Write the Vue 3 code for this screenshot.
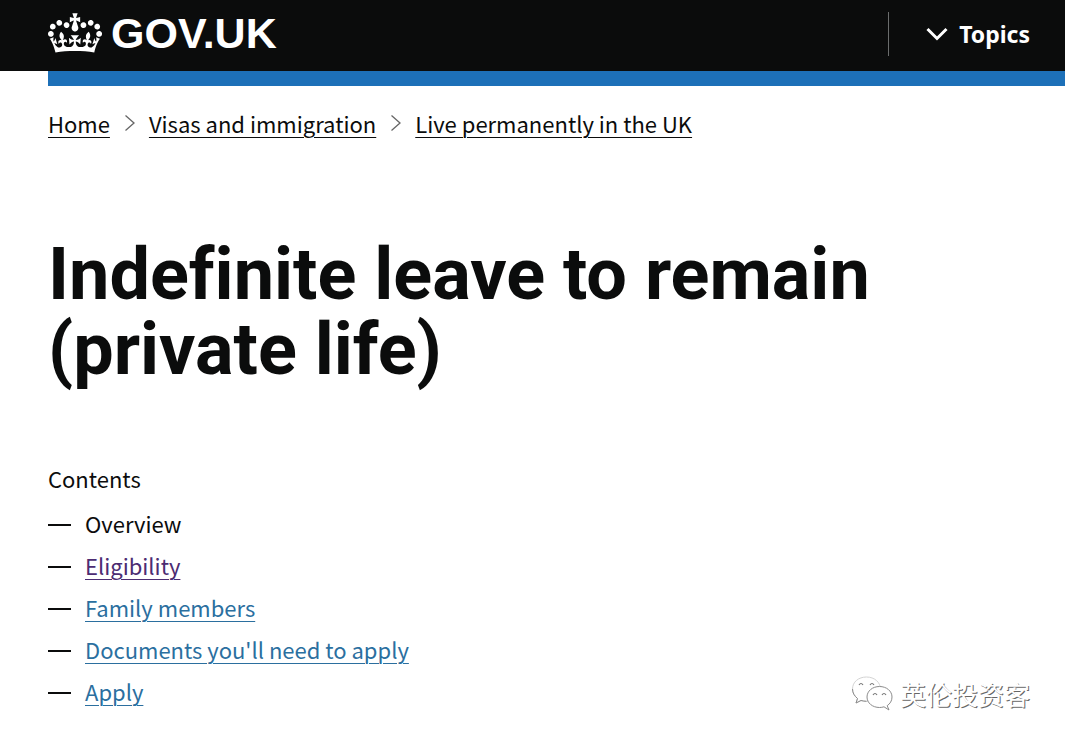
<script setup>
const crumbs = ['Home', 'Visas and immigration', 'Live permanently in the UK']
const contents = [
  { label: 'Overview', state: 'current' },
  { label: 'Eligibility', state: 'visited' },
  { label: 'Family members', state: 'link' },
  { label: "Documents you'll need to apply", state: 'link' },
  { label: 'Apply', state: 'link' },
]
</script>

<template>
  <div class="page">
    <header class="header">
      <a class="logo" href="#" aria-label="GOV.UK">
        <svg class="crown" viewBox="0 0 132 97" aria-hidden="true">
          <path fill="currentColor" d="M25 30.2c3.5 1.5 7.7-.2 9.1-3.7 1.5-3.6-.2-7.8-3.9-9.2-3.6-1.4-7.6.3-9.1 3.9-1.4 3.5.3 7.5 3.9 9zM9 39.5c3.6 1.5 7.8-.2 9.2-3.7 1.5-3.6-.2-7.8-3.9-9.1-3.6-1.5-7.6.2-9.1 3.8-1.4 3.5.3 7.5 3.8 9zM4.4 57.2c3.5 1.5 7.7-.2 9.1-3.8 1.5-3.6-.2-7.7-3.9-9.1-3.5-1.5-7.6.3-9.1 3.8-1.4 3.5.3 7.6 3.9 9.1zm38.3-21.4c3.5 1.5 7.7-.2 9.1-3.8 1.5-3.6-.2-7.7-3.9-9.1-3.6-1.5-7.6.3-9.1 3.8-1.3 3.6.4 7.7 3.9 9.1zm64.4-5.6c-3.6 1.5-7.8-.2-9.1-3.7-1.5-3.6.2-7.8 3.8-9.2 3.6-1.4 7.7.3 9.2 3.9 1.3 3.5-.4 7.5-3.9 9zm15.9 9.3c-3.6 1.5-7.7-.2-9.1-3.7-1.5-3.6.2-7.8 3.7-9.1 3.6-1.5 7.7.2 9.2 3.8 1.5 3.5-.3 7.5-3.8 9zm4.7 17.7c-3.6 1.5-7.8-.2-9.2-3.8-1.5-3.6.2-7.7 3.9-9.1 3.6-1.5 7.7.3 9.2 3.8 1.3 3.5-.4 7.6-3.9 9.1zM89.3 35.8c-3.6 1.5-7.8-.2-9.2-3.8-1.4-3.6.2-7.7 3.9-9.1 3.6-1.5 7.7.3 9.2 3.8 1.4 3.6-.3 7.7-3.9 9.1zM69.7 17.7l8.9 4.7V9.3l-8.9 2.8c-.2-.3-.5-.6-.9-.9L72.4 0H59.6l3.5 11.2c-.3.3-.6.5-.9.9l-8.8-2.8v13.1l8.8-4.7c.3.3.6.7.9.9l-5 15.4v.1c-.2.8-.4 1.6-.4 2.4 0 4.1 3.1 7.5 7 8.1h.2c.3 0 .7.1 1 .1.4 0 .7 0 1-.1h.2c4-.6 7.1-4.1 7.1-8.1 0-.8-.1-1.7-.4-2.4V34l-5.1-15.4c.4-.2.7-.6 1-.9zM66 92.8c16.9 0 32.8 1.1 47.1 3.2 4-16.9 8.9-26.7 14-33.5l-9.6-3.4c1 4.9 1.1 7.2 0 10.2-1.5-1.4-3-4.3-4.2-8.7L108.6 76c2.8-2 5-3.2 7.5-3.3-4.4 9.4-10 11.9-13.6 11.2-4.3-.8-6.3-4.6-5.6-7.9 1-4.7 5.7-5.9 8-.5 4.3-8.7-3-11.4-7.6-8.8 7.1-7.2 7.9-13.5 2.1-21.1-8 6.1-8.1 12.3-4.5 20.8-4.7-5.4-12.1-2.5-9.5 6.2 3.4-5.2 7.9-2 7.2 3.1-.6 4.3-6.4 7.8-13.5 7.2-10.3-.9-10.9-8-11.2-13.8 2.5-.5 7.1 1.8 11 7.3L80.2 60c-4.1 4.4-8 5.3-12.3 5.4 1.4-4.4 8-11.6 8-11.6H55.5s6.4 7.2 7.9 11.6c-4.2-.1-8-1-12.3-5.4l1.4 16.4c3.9-5.5 8.5-7.7 10.9-7.3-.3 5.8-.9 12.8-11.1 13.8-7.2.6-12.9-2.9-13.5-7.2-.7-5 3.8-8.3 7.1-3.1 2.7-8.7-4.6-11.6-9.4-6.2 3.7-8.5 3.6-14.7-4.6-20.8-5.8 7.6-5 13.9 2.2 21.1-4.7-2.6-11.9.1-7.7 8.8 2.3-5.5 7.1-4.2 8.1.5.7 3.3-1.3 7.1-5.7 7.9-3.5.7-9-1.8-13.5-11.2 2.5.1 4.7 1.3 7.5 3.3l-4.7-15.4c-1.2 4.4-2.7 7.2-4.3 8.7-1.1-3-.9-5.3 0-10.2l-9.5 3.4c5 6.9 9.9 16.7 14 33.5 14.8-2.1 30.8-3.2 47.7-3.2z" />
        </svg>
        <span class="wordmark">GOV.UK</span>
      </a>
      <button class="topics" type="button">
        <svg class="chevron" viewBox="0 0 22 14" aria-hidden="true">
          <path d="M1.500 2 L11 11.500 L20.500 2" fill="none" stroke="currentColor" stroke-width="3" />
        </svg>
        <span>Topics</span>
      </button>
    </header>
    <div class="bar"></div>

    <nav class="crumb-nav" aria-label="Breadcrumb">
      <ol class="crumbs">
        <li v-for="(crumb, i) in crumbs" :key="crumb">
          <svg v-if="i" class="sep" viewBox="0 0 12 18" aria-hidden="true">
            <path d="M1.500 1.500 L10 9 L1.500 16.500" fill="none" stroke="currentColor" stroke-width="1.300" />
          </svg>
          <a href="#">{{ crumb }}</a>
        </li>
      </ol>
    </nav>

    <main class="main">
      <h1>Indefinite leave to remain<br />(private life)</h1>
      <nav aria-labelledby="contents-title">
        <h2 id="contents-title">Contents</h2>
        <ol class="contents">
          <li v-for="item in contents" :key="item.label">
            <span class="dash" aria-hidden="true"></span>
            <span v-if="item.state === 'current'">{{ item.label }}</span>
            <a v-else href="#" :class="item.state">{{ item.label }}</a>
          </li>
        </ol>
      </nav>
    </main>

    <div class="watermark">
      <svg class="bubbles" viewBox="0 0 42 36" aria-hidden="true">
        <g fill="#fff" stroke-linejoin="round">
          <path stroke="#d4d4d4" d="M15.500 1C7.500 1 1.500 6 1.500 13c0 4 2 7 5 9.500L5 27l5-2.500c2 .500 3.500.800 5.500.800 8 0 14-5 14-12S23.500 1 15.500 1z" />
          <path fill="none" stroke="#8c8c8c" d="M1.500 13c0 4 2 7 5 9.500L5 27l5-2.500c2 .500 3.500.800 5.500.800" />
          <path stroke="#8c8c8c" d="M28.500 10.500c-7 0-12.500 4.500-12.500 10.500s5.500 10.500 12.500 10.500c1.500 0 3-.200 4.500-.700l5 3.200-1.800-4.300C39 27.700 41 25 41 21c0-6-5.500-10.500-12.500-10.500z" />
        </g>
        <g fill="none" stroke="#777" stroke-width="1.200">
          <path d="M8 9q2-3 4 0M19 9q2-3 4 0M22 19q2-3 4 0M31 19q2-3 4 0" />
        </g>
      </svg>
      <span>英伦投资客</span>
    </div>
  </div>
</template>

<style>
body {
  margin: 0;
  background: #fff;
}
</style>

<style scoped>
.page {
  position: relative;
  min-height: 100vh;
  box-sizing: border-box;
  color: #0b0c0c;
  font-family: "Noto Sans CJK SC", "Noto Sans", sans-serif;
  font-size: 22px;
  line-height: 30px;
}
.header {
  display: flex;
  align-items: center;
  justify-content: space-between;
  height: 71px;
  padding: 0 35px 0 48px;
  box-sizing: border-box;
  background: #0b0c0c;
  color: #fff;
}
.logo {
  display: flex;
  align-items: center;
  gap: 9px;
  color: #fff;
  text-decoration: none;
}
.crown {
  width: 54px;
  height: 40px;
  margin-bottom: 6px;
}
.wordmark {
  font: bold 43px/48px "Liberation Sans", Arial, sans-serif;
  margin-bottom: 6px;
}
.topics {
  display: flex;
  align-items: center;
  gap: 11px;
  height: 44px;
  margin-bottom: 3px;
  padding: 0 0 0 37px;
  border: 0;
  border-left: 1px solid #6b6d6d;
  background: none;
  color: #fff;
  font: bold 23px/30px "Noto Sans", sans-serif;
}
.chevron {
  width: 22px;
  height: 14px;
}
.bar {
  height: 15px;
  margin-left: 48px;
  background: #1d70b8;
}
.crumb-nav {
  padding: 22px 48px 0;
}
.crumbs,
.contents {
  margin: 0;
  padding: 0;
  list-style: none;
}
.crumbs {
  display: flex;
  flex-wrap: wrap;
}
.crumbs li {
  display: flex;
  align-items: center;
}
.sep {
  width: 12px;
  height: 18px;
  margin: 0 13px 0 14px;
  color: #666;
}
a {
  color: inherit;
  text-decoration-thickness: 1px;
  text-underline-offset: 4px;
}
.main {
  padding: 99px 48px 0;
}
h1 {
  margin: 0;
  font: bold 72px/75px Roboto, "Noto Sans", sans-serif;
  font-variant-ligatures: none;
}
h2 {
  margin: 76px 0 15px;
  font: inherit;
}
.contents {
  display: grid;
  gap: 12px;
}
.contents li {
  display: flex;
  align-items: center;
  gap: 14px;
}
.dash {
  width: 23px;
  height: 2px;
  margin-top: 4px;
  background: #0b0c0c;
}
.link {
  color: #2b6f9f;
}
.visited {
  color: #4c2c72;
}
.watermark {
  position: absolute;
  right: 35px;
  bottom: 29px;
  display: flex;
  align-items: center;
  gap: 7px;
  color: #fff;
  font: 26px/36px "Noto Sans CJK SC", sans-serif;
  text-shadow: 1px 1px 0 #666;
}
.bubbles {
  width: 42px;
  height: 36px;
}
</style>
